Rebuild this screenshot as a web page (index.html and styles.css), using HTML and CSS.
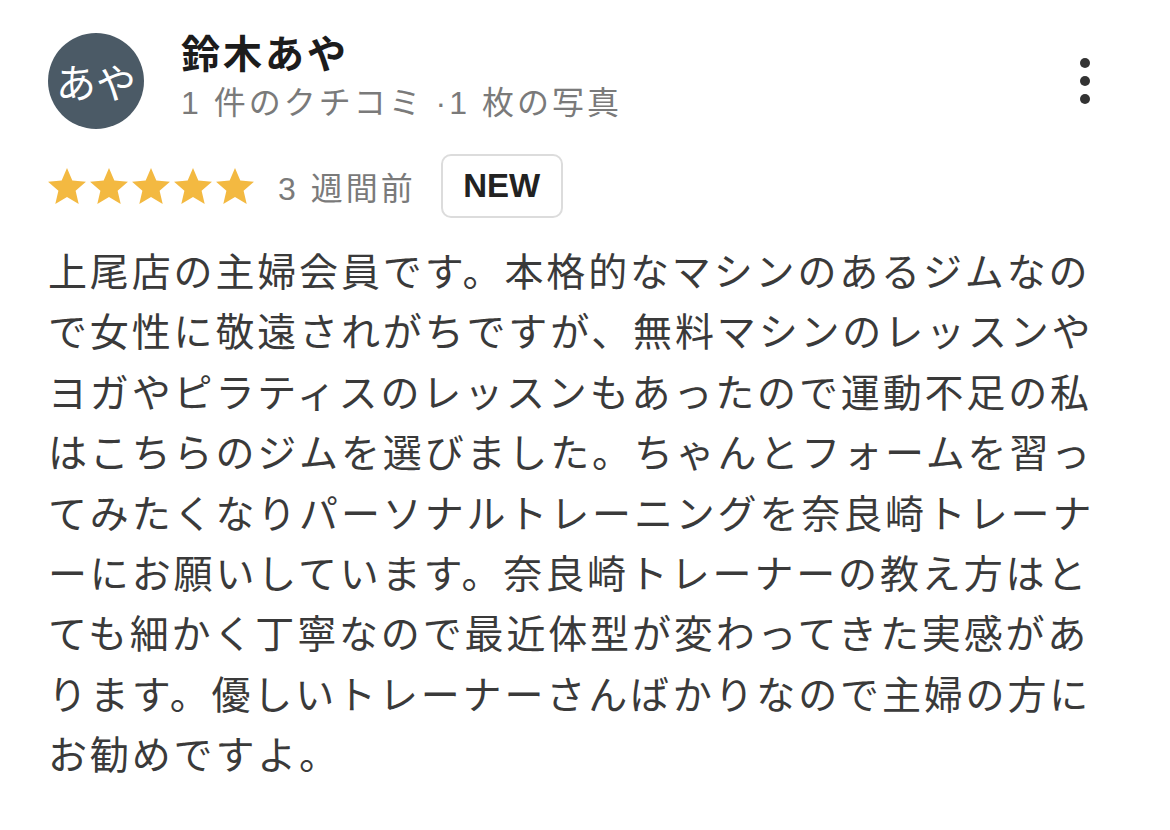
FILE: index.html
```html
<!DOCTYPE html>
<html lang="ja">
  <head>
    <meta charset="UTF-8" />
    <meta name="viewport" content="width=device-width, initial-scale=1.0" />
    <title>クチコミ</title>
    <link rel="stylesheet" href="styles.css">
  </head>
  <body>
    <div class="review">
      <div class="review-header">
        <div class="avatar">あや</div>
        <div class="author">
          <div class="author-name">鈴木あや</div>
          <div class="author-meta">1 件のクチコミ ·1 枚の写真</div>
        </div>
        <div class="more-btn">
          <span class="dot"></span>
          <span class="dot"></span>
          <span class="dot"></span>
        </div>
      </div>

      <div class="review-meta">
        <div class="stars">
          <svg class="star" viewBox="2 2 20 19"><path d="M12 17.27L18.18 21l-1.64-7.03L22 9.24l-7.19-.61L12 2 9.19 8.63 2 9.24l5.46 4.73L5.82 21z"/></svg>
          <svg class="star" viewBox="2 2 20 19"><path d="M12 17.27L18.18 21l-1.64-7.03L22 9.24l-7.19-.61L12 2 9.19 8.63 2 9.24l5.46 4.73L5.82 21z"/></svg>
          <svg class="star" viewBox="2 2 20 19"><path d="M12 17.27L18.18 21l-1.64-7.03L22 9.24l-7.19-.61L12 2 9.19 8.63 2 9.24l5.46 4.73L5.82 21z"/></svg>
          <svg class="star" viewBox="2 2 20 19"><path d="M12 17.27L18.18 21l-1.64-7.03L22 9.24l-7.19-.61L12 2 9.19 8.63 2 9.24l5.46 4.73L5.82 21z"/></svg>
          <svg class="star" viewBox="2 2 20 19"><path d="M12 17.27L18.18 21l-1.64-7.03L22 9.24l-7.19-.61L12 2 9.19 8.63 2 9.24l5.46 4.73L5.82 21z"/></svg>
        </div>
        <span class="review-date">3 週間前</span>
        <span class="badge-new">NEW</span>
      </div>

      <p class="review-text">
        上尾店の主婦会員です。本格的なマシンのあるジムなの<br>
        で女性に敬遠されがちですが、無料マシンのレッスンや<br>
        ヨガやピラティスのレッスンもあったので運動不足の私<br>
        はこちらのジムを選びました。ちゃんとフォームを習っ<br>
        てみたくなりパーソナルトレーニングを奈良崎トレーナ<br>
        ーにお願いしています。奈良崎トレーナーの教え方はと<br>
        ても細かく丁寧なので最近体型が変わってきた実感があ<br>
        ります。優しいトレーナーさんばかりなので主婦の方に<br>
        お勧めですよ。
      </p>
    </div>
  </body>
</html>
```

FILE: styles.css
```css
* {
  margin: 0;
  padding: 0;
  box-sizing: border-box;
}

body {
  background: #ffffff;
  font-family: 'Liberation Sans', 'Noto Sans CJK JP', sans-serif;
  color: #333333;
}

.review {
  padding: 33px 0 0 48px;
  width: 1170px;
}

.review-header {
  display: flex;
  align-items: flex-start;
}

.avatar {
  width: 96px;
  height: 96px;
  border-radius: 50%;
  background-color: #4b5a66;
  color: #ffffff;
  font-size: 40px;
  display: flex;
  align-items: center;
  justify-content: center;
  flex-shrink: 0;
}

.author {
  margin-left: 37px;
  flex: 1;
}

.author-name {
  font-size: 39px;
  font-weight: bold;
  letter-spacing: 3px;
  line-height: 44px;
  color: #1c1c1c;
}

.author-meta {
  margin-top: 4px;
  font-size: 32px;
  line-height: 44px;
  color: #7a7a7a;
  letter-spacing: 3px;
}

.more-btn {
  display: flex;
  flex-direction: column;
  gap: 8px;
  margin: 25px 80px 0 0;
  width: 10px;
}

.dot {
  width: 10px;
  height: 10px;
  border-radius: 50%;
  background-color: #333333;
}

.review-meta {
  display: flex;
  align-items: center;
  margin-top: 25px;
  height: 64px;
}

.stars {
  display: flex;
  gap: 4px;
}

.star {
  width: 38px;
  height: 36px;
  fill: #f3b941;
}

.review-date {
  margin-left: 24px;
  font-size: 32px;
  color: #7a7a7a;
  letter-spacing: 3px;
}

.badge-new {
  margin-left: 25px;
  width: 122px;
  height: 64px;
  border: 2px solid #dcdcdc;
  border-radius: 10px;
  display: flex;
  align-items: center;
  justify-content: center;
  font-size: 33px;
  font-weight: bold;
  color: #222222;
}

.review-text {
  margin-top: 21px;
  font-family: 'Noto Sans CJK JP', sans-serif;
  font-size: 39px;
  letter-spacing: 2.85px;
  line-height: 60.4px;
  color: #3a3a3a;
  white-space: nowrap;
}
```
